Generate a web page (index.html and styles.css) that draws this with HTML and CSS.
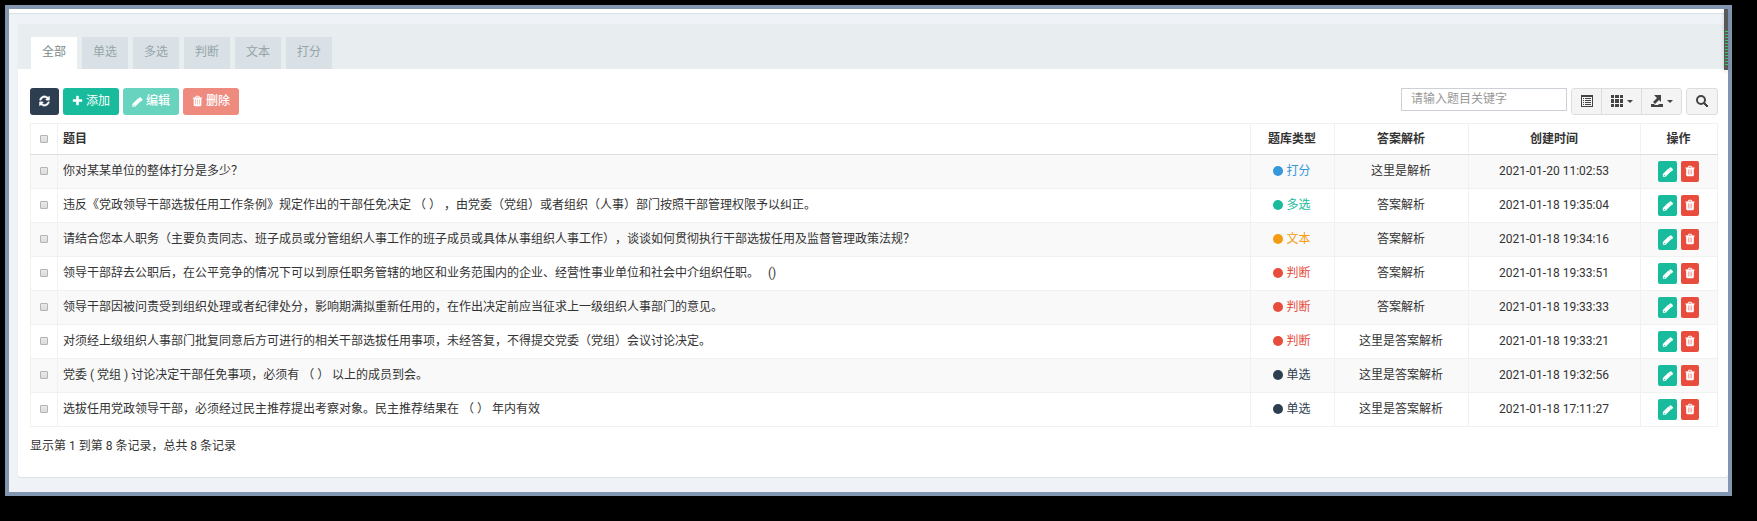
FILE: index.html
```
<!DOCTYPE html>
<html lang="zh-CN">
<head>
<meta charset="utf-8">
<title>题目管理</title>
<link rel="stylesheet" href="styles.css">
</head>
<body>
<svg class="sprite" aria-hidden="true">
  <symbol id="refresh" viewBox="0 0 1536 1792"><path stroke="currentColor" stroke-width="60" d="M1511 1056q0 5-1 7-64 268-268 434.500T764 1664q-146 0-282.500-55T238 1452l-129 129q-19 19-45 19t-45-19-19-45v-448q0-26 19-45t45-19h448q26 0 45 19t19 45-19 45l-137 137q71 66 161 102t187 36q134 0 250-65t186-179q11-17 53-117 8-23 30-23h192q13 0 22.500 9.500t9.500 22.500zm25-800v448q0 26-19 45t-45 19h-448q-26 0-45-19t-19-45 19-45l138-138Q969 384 768 384q-134 0-250 65T332 628q-11 17-53 117-8 23-30 23H50q-13 0-22.500-9.500T18 736v-7q65-268 270-434.500T768 128q146 0 284 55.500T1297 340l130-129q19-19 45-19t45 19 19 45z"/></symbol>
  <symbol id="plus" viewBox="0 0 1408 1792"><path d="M1408 736v192q0 40-28 68t-68 28H896v416q0 40-28 68t-68 28H608q-40 0-68-28t-28-68v-416H96q-40 0-68-28t-28-68V736q0-40 28-68t68-28h416V224q0-40 28-68t68-28h192q40 0 68 28t28 68v416h416q40 0 68 28t28 68z"/></symbol>
  <symbol id="pencil" viewBox="0 0 1536 1792"><path fill-rule="evenodd" d="M832 512l416 416-832 832H0v-416zM220 1440l-70 70v70h90v70h70l70-70zM1515 704q0 53-37 90l-166 166-416-416 166-165q36-38 90-38 53 0 91 38l235 234q37 39 37 91z"/></symbol>
  <symbol id="trash" viewBox="0 0 1408 1792"><path fill-rule="evenodd" d="M400 680v720h70V680zM670 680v720h70V680zM940 680v720h70V680zM480 384h448l-48-117q-7-9-17-11H546q-10 2-17 11zm928 32v64q0 14-9 23t-23 9h-96v948q0 83-47 143.500t-113 60.500H288q-66 0-113-58.500T128 1464V512H32q-14 0-23-9t-9-23v-64q0-14 9-23t23-9h309l70-167q15-37 54-63t79-26h320q40 0 79 26t54 63l70 167h309q14 0 23 9t9 23z"/></symbol>
  <symbol id="list" viewBox="0 0 12 12"><path fill-rule="evenodd" d="M0 0h12v12H0zM1 2v9h10V2zM2 3h1v1H2zm2 0h6v1H4zM2 5h1v1H2zm2 0h6v1H4zM2 7h1v1H2zm2 0h6v1H4zM2 9h1v1H2zm2 0h6v1H4z"/></symbol>
  <symbol id="grid" viewBox="0 0 12 12"><path d="M0 0h3v3H0zM4 0h4v3H4zM9 0h3v3H9zM0 4h3v4H0zM4 4h4v4H4zM9 4h3v4H9zM0 9h3v3H0zM4 9h4v3H4zM9 9h3v3H9z"/></symbol>
  <symbol id="export" viewBox="0 0 12 12"><path d="M3 0h7v7L8 5 4 9 2 7l4-4zM0 9h3l1 1h3l1-1h4v3H0z"/></symbol>
  <symbol id="search" viewBox="0 0 12 12"><circle cx="5" cy="5" r="4" fill="none" stroke="currentColor" stroke-width="2"/><path d="M7 8l1-1 4 4-1 1z" stroke="currentColor"/></symbol>
</svg>
<main class="window">
  <div class="topbar"></div>
  <div class="meter"></div>
  <section class="panel">
    <nav class="tabs">
      <a class="tab active" href="#">全部</a>
      <a class="tab" href="#">单选</a>
      <a class="tab" href="#">多选</a>
      <a class="tab" href="#">判断</a>
      <a class="tab" href="#">文本</a>
      <a class="tab" href="#">打分</a>
    </nav>
    <div class="content">
      <div class="toolbar">
        <div class="actions">
          <button class="btn dark" aria-label="刷新"><svg class="icon"><use href="#refresh"/></svg></button>
          <button class="btn green"><svg class="icon"><use href="#plus"/></svg>添加</button>
          <button class="btn green" disabled><svg class="icon"><use href="#pencil"/></svg>编辑</button>
          <button class="btn red" disabled><svg class="icon"><use href="#trash"/></svg>删除</button>
        </div>
        <div class="tools">
          <input class="keyword" type="text" placeholder="请输入题目关键字" aria-label="题目关键字">
          <div class="group">
            <button class="tool" aria-label="切换视图"><svg class="icon"><use href="#list"/></svg></button>
            <button class="tool wide" aria-label="列"><svg class="icon"><use href="#grid"/></svg><span class="caret"></span></button>
            <button class="tool wide" aria-label="导出"><svg class="icon"><use href="#export"/></svg><span class="caret"></span></button>
          </div>
          <button class="tool single" aria-label="搜索"><svg class="icon"><use href="#search"/></svg></button>
        </div>
      </div>
      <table class="grid">
        <colgroup><col class="c-check"><col><col class="c-type"><col class="c-answer"><col class="c-time"><col class="c-ops"></colgroup>
        <thead>
          <tr><th><input type="checkbox" aria-label="全选"></th><th class="title">题目</th><th>题库类型</th><th>答案解析</th><th>创建时间</th><th>操作</th></tr>
        </thead>
        <tbody>
          <tr><td><input type="checkbox" aria-label="选择"></td><td class="title">你对某某单位的整体打分是多少？</td><td><span class="type blue">打分</span></td><td>这里是解析</td><td>2021-01-20 11:02:53</td><td><div class="ops"><button class="op green" aria-label="编辑"><svg class="icon"><use href="#pencil"/></svg></button><button class="op red" aria-label="删除"><svg class="icon"><use href="#trash"/></svg></button></div></td></tr>
          <tr><td><input type="checkbox" aria-label="选择"></td><td class="title">违反《党政领导干部选拔任用工作条例》规定作出的干部任免决定 （ ） ，由党委（党组）或者组织（人事）部门按照干部管理权限予以纠正。</td><td><span class="type teal">多选</span></td><td>答案解析</td><td>2021-01-18 19:35:04</td><td><div class="ops"><button class="op green" aria-label="编辑"><svg class="icon"><use href="#pencil"/></svg></button><button class="op red" aria-label="删除"><svg class="icon"><use href="#trash"/></svg></button></div></td></tr>
          <tr><td><input type="checkbox" aria-label="选择"></td><td class="title">请结合您本人职务（主要负责同志、班子成员或分管组织人事工作的班子成员或具体从事组织人事工作），谈谈如何贯彻执行干部选拔任用及监督管理政策法规？</td><td><span class="type orange">文本</span></td><td>答案解析</td><td>2021-01-18 19:34:16</td><td><div class="ops"><button class="op green" aria-label="编辑"><svg class="icon"><use href="#pencil"/></svg></button><button class="op red" aria-label="删除"><svg class="icon"><use href="#trash"/></svg></button></div></td></tr>
          <tr><td><input type="checkbox" aria-label="选择"></td><td class="title">领导干部辞去公职后，在公平竞争的情况下可以到原任职务管辖的地区和业务范围内的企业、经营性事业单位和社会中介组织任职。 &nbsp; ()</td><td><span class="type crimson">判断</span></td><td>答案解析</td><td>2021-01-18 19:33:51</td><td><div class="ops"><button class="op green" aria-label="编辑"><svg class="icon"><use href="#pencil"/></svg></button><button class="op red" aria-label="删除"><svg class="icon"><use href="#trash"/></svg></button></div></td></tr>
          <tr><td><input type="checkbox" aria-label="选择"></td><td class="title">领导干部因被问责受到组织处理或者纪律处分，影响期满拟重新任用的，在作出决定前应当征求上一级组织人事部门的意见。</td><td><span class="type crimson">判断</span></td><td>答案解析</td><td>2021-01-18 19:33:33</td><td><div class="ops"><button class="op green" aria-label="编辑"><svg class="icon"><use href="#pencil"/></svg></button><button class="op red" aria-label="删除"><svg class="icon"><use href="#trash"/></svg></button></div></td></tr>
          <tr><td><input type="checkbox" aria-label="选择"></td><td class="title">对须经上级组织人事部门批复同意后方可进行的相关干部选拔任用事项，未经答复，不得提交党委（党组）会议讨论决定。</td><td><span class="type crimson">判断</span></td><td>这里是答案解析</td><td>2021-01-18 19:33:21</td><td><div class="ops"><button class="op green" aria-label="编辑"><svg class="icon"><use href="#pencil"/></svg></button><button class="op red" aria-label="删除"><svg class="icon"><use href="#trash"/></svg></button></div></td></tr>
          <tr><td><input type="checkbox" aria-label="选择"></td><td class="title">党委 ( 党组 ) 讨论决定干部任免事项，必须有 （ ） 以上的成员到会。</td><td><span class="type navy">单选</span></td><td>这里是答案解析</td><td>2021-01-18 19:32:56</td><td><div class="ops"><button class="op green" aria-label="编辑"><svg class="icon"><use href="#pencil"/></svg></button><button class="op red" aria-label="删除"><svg class="icon"><use href="#trash"/></svg></button></div></td></tr>
          <tr><td><input type="checkbox" aria-label="选择"></td><td class="title">选拔任用党政领导干部，必须经过民主推荐提出考察对象。民主推荐结果在 （ ） 年内有效</td><td><span class="type navy">单选</span></td><td>这里是答案解析</td><td>2021-01-18 17:11:27</td><td><div class="ops"><button class="op green" aria-label="编辑"><svg class="icon"><use href="#pencil"/></svg></button><button class="op red" aria-label="删除"><svg class="icon"><use href="#trash"/></svg></button></div></td></tr>
        </tbody>
      </table>
      <p class="summary">显示第 1 到第 8 条记录，总共 8 条记录</p>
    </div>
  </section>
</main>
</body>
</html>
```
FILE: styles.css
```
* { box-sizing: border-box; }
body {
  margin: 0;
  padding: 5px 25px 25px 5px;
  background: #000;
  color: #333;
  font: 12px/18px Roboto, "Noto Sans CJK SC", sans-serif;
  text-spacing-trim: space-all;
}
button, input { font: inherit; margin: 0; }
.sprite { position: absolute; width: 0; height: 0; }
.window {
  position: relative;
  border: 4px solid #8296b0;
  background: #eff3f7;
  padding-bottom: 15px;
}
.topbar { height: 5px; background: #fff; border-bottom: 1px solid #d9e0e6; }
.meter {
  position: absolute;
  top: 0;
  right: 0;
  width: 4px;
  height: 61px;
  background: repeating-linear-gradient(#3fc463 0 1px, #585858 1px 3px) 1px 22px / 3px 36px no-repeat #585858;
  box-shadow: 0 1px 4px rgba(0, 0, 0, .15);
}
.panel {
  margin: 10px 0 0 9px;
  background: #fff;
  border-radius: 3px;
  box-shadow: 0 1px 1px rgba(0, 0, 0, .08);
}
.tabs {
  display: flex;
  gap: 5px;
  padding: 13px 13px 0;
  background: #e8edf0;
}
.tab {
  padding: 6px 11px 8px;
  background: #d9e0e6;
  color: #95a5a6;
  text-decoration: none;
}
.tab.active { background: #fff; color: #7b8a8b; }
.content { padding: 19px 10px 22px 12px; }
.toolbar { display: flex; justify-content: space-between; margin-bottom: 8px; }
.actions, .tools { display: flex; align-items: flex-start; gap: 4px; }
.btn {
  display: flex;
  align-items: center;
  gap: 3px;
  height: 27px;
  padding: 0 9px 1px;
  border: 0;
  border-radius: 3px;
  color: #fff;
}
.btn:disabled { opacity: .65; font-weight: 500; }
.icon { width: 12px; height: 12px; fill: currentColor; }
.btn .icon { width: 11px; }
.dark { background: #2c3e50; }
.green { background: #18bc9c; }
.red { background: #e74c3c; }
.keyword {
  width: 166px;
  height: 23px;
  padding: 0 9px 2px;
  border: 1px solid #ccd0d7;
  background: #fff;
}
.keyword::placeholder { color: #999; }
.group {
  display: flex;
  border: 1px solid #ddd;
  border-radius: 3px;
  overflow: hidden;
}
.tool {
  display: flex;
  align-items: center;
  justify-content: center;
  gap: 4px;
  width: 29px;
  height: 25px;
  padding: 0 0 1px;
  border: 0;
  background: #f4f4f4;
  color: #444;
}
.tool.wide { width: 40px; border-left: 1px solid #ddd; }
.tool.single { width: 32px; height: 27px; border: 1px solid #ddd; border-radius: 3px; }
.caret { border: 3px solid transparent; border-top-color: currentColor; border-bottom: 0; }
.grid { width: 100%; border-collapse: collapse; table-layout: fixed; }
.c-check { width: 27px; }
.c-type { width: 84px; }
.c-answer { width: 134px; }
.c-time { width: 172px; }
.c-ops { width: 77px; }
.grid th, .grid td {
  height: 34px;
  padding: 0 1px 1px 0;
  border: 1px solid #f1f1f1;
  text-align: center;
  vertical-align: middle;
}
.grid th { height: 31px; border-bottom: 1px solid #ddd; font-weight: 700; }
.grid .title { padding-left: 5px; text-align: left; }
.grid tbody tr:nth-child(odd) { background: #f9f9f9; }
.grid input {
  appearance: none;
  display: block;
  width: 8px;
  height: 8px;
  margin: 0 auto;
  border: 1px solid #b4b4b4;
  border-radius: 1px;
  background: linear-gradient(#e9e9e9, #dcdcdc);
}
.type { display: inline-flex; align-items: center; gap: 3px; }
.type::before {
  content: "";
  width: 10px;
  height: 10px;
  border-radius: 50%;
  background: currentColor;
}
.blue { color: #3498db; }
.teal { color: #18bc9c; }
.orange { color: #f39c12; }
.crimson { color: #e74c3c; }
.navy { color: #2c3e50; }
.ops { display: flex; justify-content: center; gap: 4px; }
.op {
  display: flex;
  align-items: center;
  justify-content: center;
  width: 19px;
  height: 21px;
  padding: 0;
  border: 0;
  border-radius: 2px;
  color: #fff;
}
.op.red { width: 18px; }
.summary { margin: 10px 0 0; }
```
